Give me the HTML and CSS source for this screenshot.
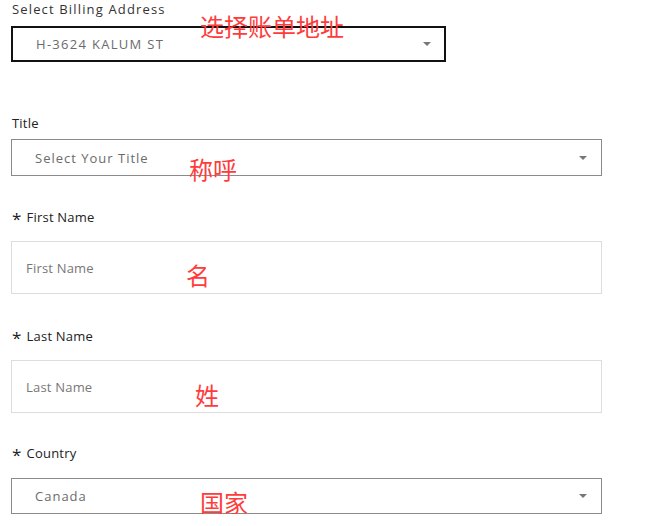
FILE: index.html
```html
<!DOCTYPE html>
<html lang="en">
  <head>
    <meta charset="UTF-8" />
    <title>Billing Details</title>
    <link rel="stylesheet" href="styles.css">
  </head>
  <body>
    <form class="billing-form">
      <div class="field field-billing">
        <label class="field-label wide">Select Billing Address</label>
        <div class="select select-strong">
          <span class="select-value caps">H-3624 KALUM ST</span>
          <span class="select-arrow"></span>
        </div>
        <span class="note note-billing">选择账单地址</span>
      </div>

      <div class="field field-title">
        <label class="field-label">Title</label>
        <div class="select">
          <span class="select-value">Select Your Title</span>
          <span class="select-arrow"></span>
        </div>
        <span class="note note-title">称呼</span>
      </div>

      <div class="field field-name field-first">
        <label class="field-label"><span class="req">*</span>First Name</label>
        <div class="text-input">First Name</div>
        <span class="note note-first">名</span>
      </div>

      <div class="field field-name field-last">
        <label class="field-label"><span class="req">*</span>Last Name</label>
        <div class="text-input">Last Name</div>
        <span class="note note-last">姓</span>
      </div>

      <div class="field field-country">
        <label class="field-label"><span class="req">*</span>Country</label>
        <div class="select">
          <span class="select-value">Canada</span>
          <span class="select-arrow"></span>
        </div>
        <span class="note note-country">国家</span>
      </div>
    </form>
  </body>
</html>
```

FILE: styles.css
```css
* {
  margin: 0;
  padding: 0;
  box-sizing: border-box;
}

body {
  background: #ffffff;
  color: #222222;
  font-family: 'Open Sans', sans-serif;
}

.billing-form {
  padding-left: 11px;
  width: 602px;
}

.field {
  position: relative;
}

.field-label {
  display: flex;
  align-items: center;
  height: 17px;
  padding-left: 1px;
  font-family: 'Open Sans', sans-serif;
  font-size: 13px;
  letter-spacing: 0.2px;
  color: #222222;
}

.field-label.wide {
  letter-spacing: 1.15px;
  color: #333333;
}

.req {
  font-size: 17px;
  line-height: 1;
  margin-top: 4px;
  margin-right: 5px;
}

.field-billing .field-label { margin-bottom: 9px; }
.field-title { margin-top: 52px; }
.field-title .field-label { margin-bottom: 8px; }
.field-first { margin-top: 32px; }
.field-last { margin-top: 33px; }
.field-name .field-label { margin-bottom: 16px; }
.field-country { margin-top: 31px; }
.field-country .field-label { margin-bottom: 17px; }

.select {
  display: flex;
  align-items: center;
  justify-content: space-between;
  height: 37px;
  padding: 0 14px 0 23px;
  border: 1px solid #8a8a8a;
}

.select-strong {
  width: 435px;
  height: 36px;
  border: 2px solid #111111;
  padding: 0 13px 0 23px;
}

.field-country .select {
  height: 36px;
}

.select-value {
  font-family: 'Open Sans', sans-serif;
  font-size: 13px;
  letter-spacing: 1px;
  color: #6b6b6b;
}

.select-value.caps {
  letter-spacing: 1.3px;
}

.select-arrow {
  width: 0;
  height: 0;
  border-left: 4px solid transparent;
  border-right: 4px solid transparent;
  border-top: 4px solid #777777;
}

.text-input {
  display: flex;
  align-items: center;
  height: 53px;
  padding-left: 14px;
  border: 1px solid #dddddd;
  font-family: 'Open Sans', sans-serif;
  font-size: 13px;
  letter-spacing: 0.2px;
  color: #777777;
}

.note {
  position: absolute;
  font-family: 'Noto Sans CJK SC', sans-serif;
  font-size: 24px;
  line-height: 1;
  color: #ff3b3b;
}

.note-billing { left: 189px; top: 14px; }
.note-title { left: 178px; top: 43px; }
.note-first { left: 175px; top: 55px; }
.note-last { left: 184px; top: 56px; }
.note-country { left: 189px; top: 46px; }
```
